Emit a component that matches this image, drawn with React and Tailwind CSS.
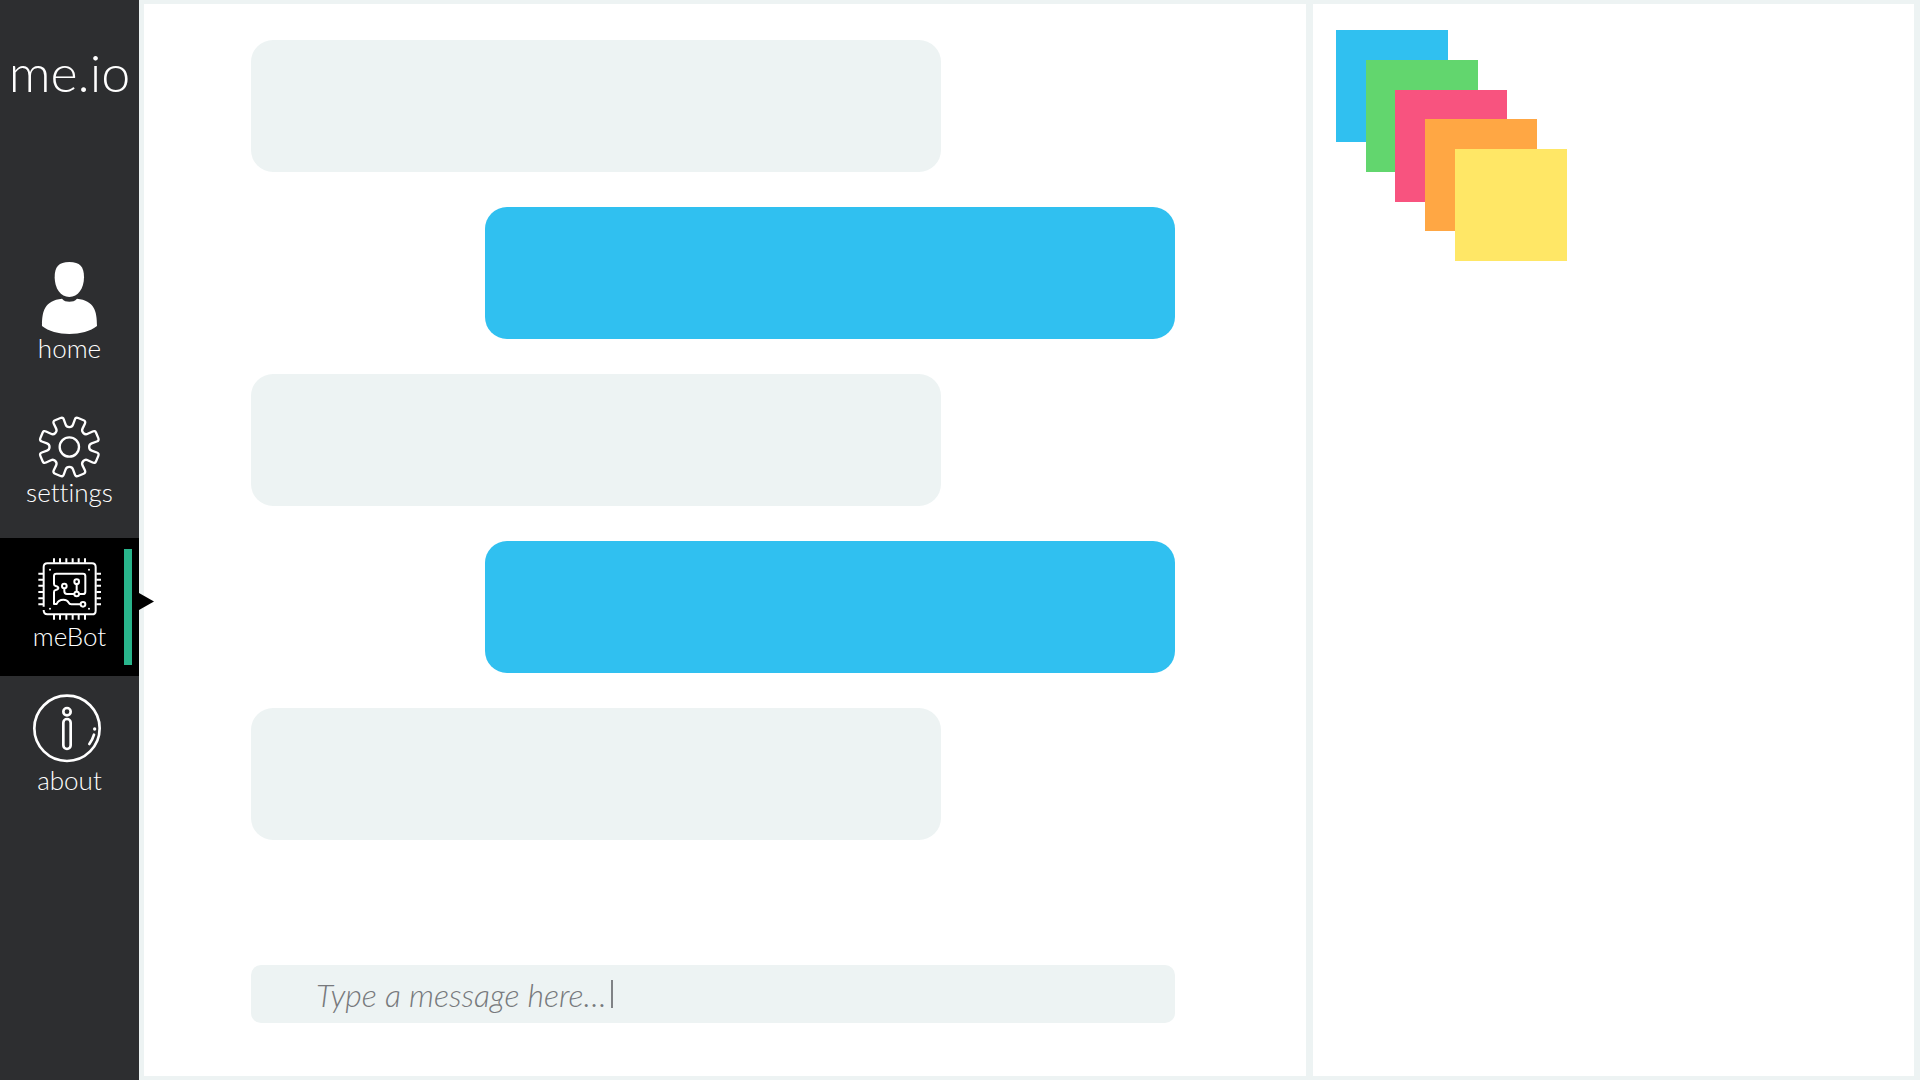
import React from "react";

function roundedPolygon(points, radius) {
  const n = points.length;
  const toward = (a, b) => {
    const d = Math.hypot(b[0] - a[0], b[1] - a[1]);
    const t = Math.min(radius, d / 2) / d;
    return [a[0] + (b[0] - a[0]) * t, a[1] + (b[1] - a[1]) * t];
  };
  return (
    points
      .map((p, i) => {
        const before = toward(p, points[(i + n - 1) % n]);
        const after = toward(p, points[(i + 1) % n]);
        return `${i ? "L" : "M"}${before} Q${p} ${after}`;
      })
      .join(" ") + "Z"
  );
}

// Eight teeth, each described by [angle from the valley, radius].
const gearPoints = Array.from({ length: 8 }, (_, k) =>
  [[8, 60], [12, 92], [33, 92], [37, 60]].map(([deg, r]) => {
    const a = ((k * 45 + deg) * Math.PI) / 180;
    return [208 + r * Math.sin(a), 141 - r * Math.cos(a)];
  })
).flat();
const gearPath = roundedPolygon(gearPoints, 8);

const iconProps = {
  className: "h-[72px] w-[79px]",
  fill: "none",
  stroke: "white",
  strokeLinecap: "round",
  strokeLinejoin: "round",
  "aria-hidden": true,
};

function PersonIcon() {
  return (
    <svg {...iconProps} viewBox="90 66 237 216" stroke="none" fill="white">
      <path d="M208 66C240 66 252 80 252 112C252 146 234 171 208 171S164 146 164 112C164 80 176 66 208 66Z" />
      <path d="M126 258C126 212 134 182 186 176C192 183 199 185 208 185S225 183 231 176C283 182 291 212 291 258C272 274 240 282 208 282S145 274 126 258Z" />
    </svg>
  );
}

function GearIcon() {
  return (
    <svg {...iconProps} viewBox="90 18 237 216" strokeWidth="7">
      <path d={gearPath} />
      <circle cx="208" cy="141" r="29" />
    </svg>
  );
}

const pinColumns = [162, 180, 199, 218, 236, 255];
const pinRows = [131, 149, 167, 186, 205, 223];

function ChipIcon() {
  return (
    <svg {...iconProps} viewBox="90 60 237 216" strokeWidth="6" strokeLinecap="butt">
      <path d="M131 230V111Q131 100 142 100H276Q287 100 287 111V242Q287 253 276 253H142Q131 253 131 240" />
      {pinColumns.map((x) => (
        <path key={x} d={`M${x} 85V98M${x} 254V269`} />
      ))}
      {pinRows.map((y) => (
        <path key={y} d={`M115 ${y}H129M289 ${y}H303`} />
      ))}
      <path d="M222 192H201Q193 192 193 184V175M230 162V185M238 192H249Q256 192 256 185V138Q256 131 249 131H169Q162 131 162 138V162Q162 167 167 168Q175 170 175 174T167 180Q162 181 162 186V222H170Q175 209 190 209Q202 209 206 218Q208 223 214 223H241" />
      <circle cx="193" cy="168" r="7" />
      <circle cx="230" cy="155" r="7" />
      <circle cx="230" cy="192" r="7" />
      <circle cx="249" cy="223" r="7" />
      <g fill="white" stroke="none">
        <circle cx="150" cy="119" r="3" />
        <circle cx="267" cy="119" r="3" />
        <circle cx="150" cy="236" r="3" />
        <circle cx="267" cy="236" r="3" />
      </g>
    </svg>
  );
}

function InfoIcon() {
  return (
    <svg {...iconProps} viewBox="90 42 237 216" strokeWidth="8">
      <circle cx="201" cy="145" r="98" />
      <circle cx="201" cy="95" r="11" />
      <rect x="190" y="117" width="22" height="90" rx="11" />
      <path d="M282 164Q278 178 268 192" />
      <circle cx="284" cy="147" r="5" fill="white" stroke="none" />
    </svg>
  );
}

const navItems = [
  { label: "home", Icon: PersonIcon },
  { label: "settings", Icon: GearIcon },
  { label: "meBot", Icon: ChipIcon, active: true },
  { label: "about", Icon: InfoIcon },
];

function NavItem({ label, Icon, active }) {
  return (
    <a
      href={`#${label}`}
      aria-current={active ? "page" : undefined}
      className={`relative flex h-[138px] flex-col items-center pt-3 text-[26px] leading-7 ${active ? "bg-black" : ""}`}
    >
      <Icon />
      <span>{label}</span>
      {active && (
        <>
          <span className="absolute inset-y-[11px] right-[7px] w-2 bg-[#29b58c]" />
          <svg
            className="absolute left-full top-[55px] z-10 h-[17px] w-[15px]"
            viewBox="0 0 15 17"
            aria-hidden="true"
          >
            <path d="M0 0L15 8.500L0 17Z" />
          </svg>
        </>
      )}
    </a>
  );
}

const messages = ["bot", "me", "bot", "me", "bot"];

const notes = [
  "bg-[#30c0f0]",
  "-mt-[82px] ml-[30px] bg-[#62d66e]",
  "-mt-[82px] ml-[59px] bg-[#f8537f]",
  "-mt-[83px] ml-[89px] bg-[#ffa744]",
  "-mt-[82px] ml-[119px] bg-[#ffe766]",
];

export default function App() {
  return (
    <div className="flex min-h-screen bg-[#edf3f3] font-['Lato',sans-serif] font-light [font-variant-ligatures:none]">
      <aside className="w-[139px] shrink-0 bg-[#2d2e30] text-white">
        <h1 className="pt-10 text-center text-[52px] leading-[64px]">me.io</h1>
        <nav className="mt-[146px] flex flex-col gap-[6px]">
          {navItems.map((item) => (
            <NavItem key={item.label} {...item} />
          ))}
        </nav>
      </aside>

      <main className="grid flex-1 grid-cols-[1162fr_601fr] gap-[7px] py-1 pl-[5px] pr-[6px]">
        <section className="flex flex-col justify-between bg-white pb-[53px] pl-[107px] pr-[131px] pt-9">
          <div className="flex flex-col gap-[35px]">
            {messages.map((from, i) => (
              <div
                key={i}
                className={`h-[132px] rounded-[22px] ${
                  from === "me" ? "ml-[234px] bg-[#30c0f0]" : "mr-[234px] bg-[#edf3f3]"
                }`}
              />
            ))}
          </div>
          <form className="flex h-[58px] items-center rounded-[10px] bg-[#edf3f3] pl-[65px]">
            <input
              type="text"
              aria-label="Message"
              placeholder="Type a message here…"
              className="field-sizing-content bg-transparent text-[32px] italic leading-9 outline-none placeholder:text-[#77797c]"
            />
            <span className="ml-1 h-7 w-[2px] bg-[#808285]" />
          </form>
        </section>

        <section className="bg-white pl-[23px] pt-[26px]">
          {notes.map((note) => (
            <div key={note} className={`size-28 ${note}`} />
          ))}
        </section>
      </main>
    </div>
  );
}
